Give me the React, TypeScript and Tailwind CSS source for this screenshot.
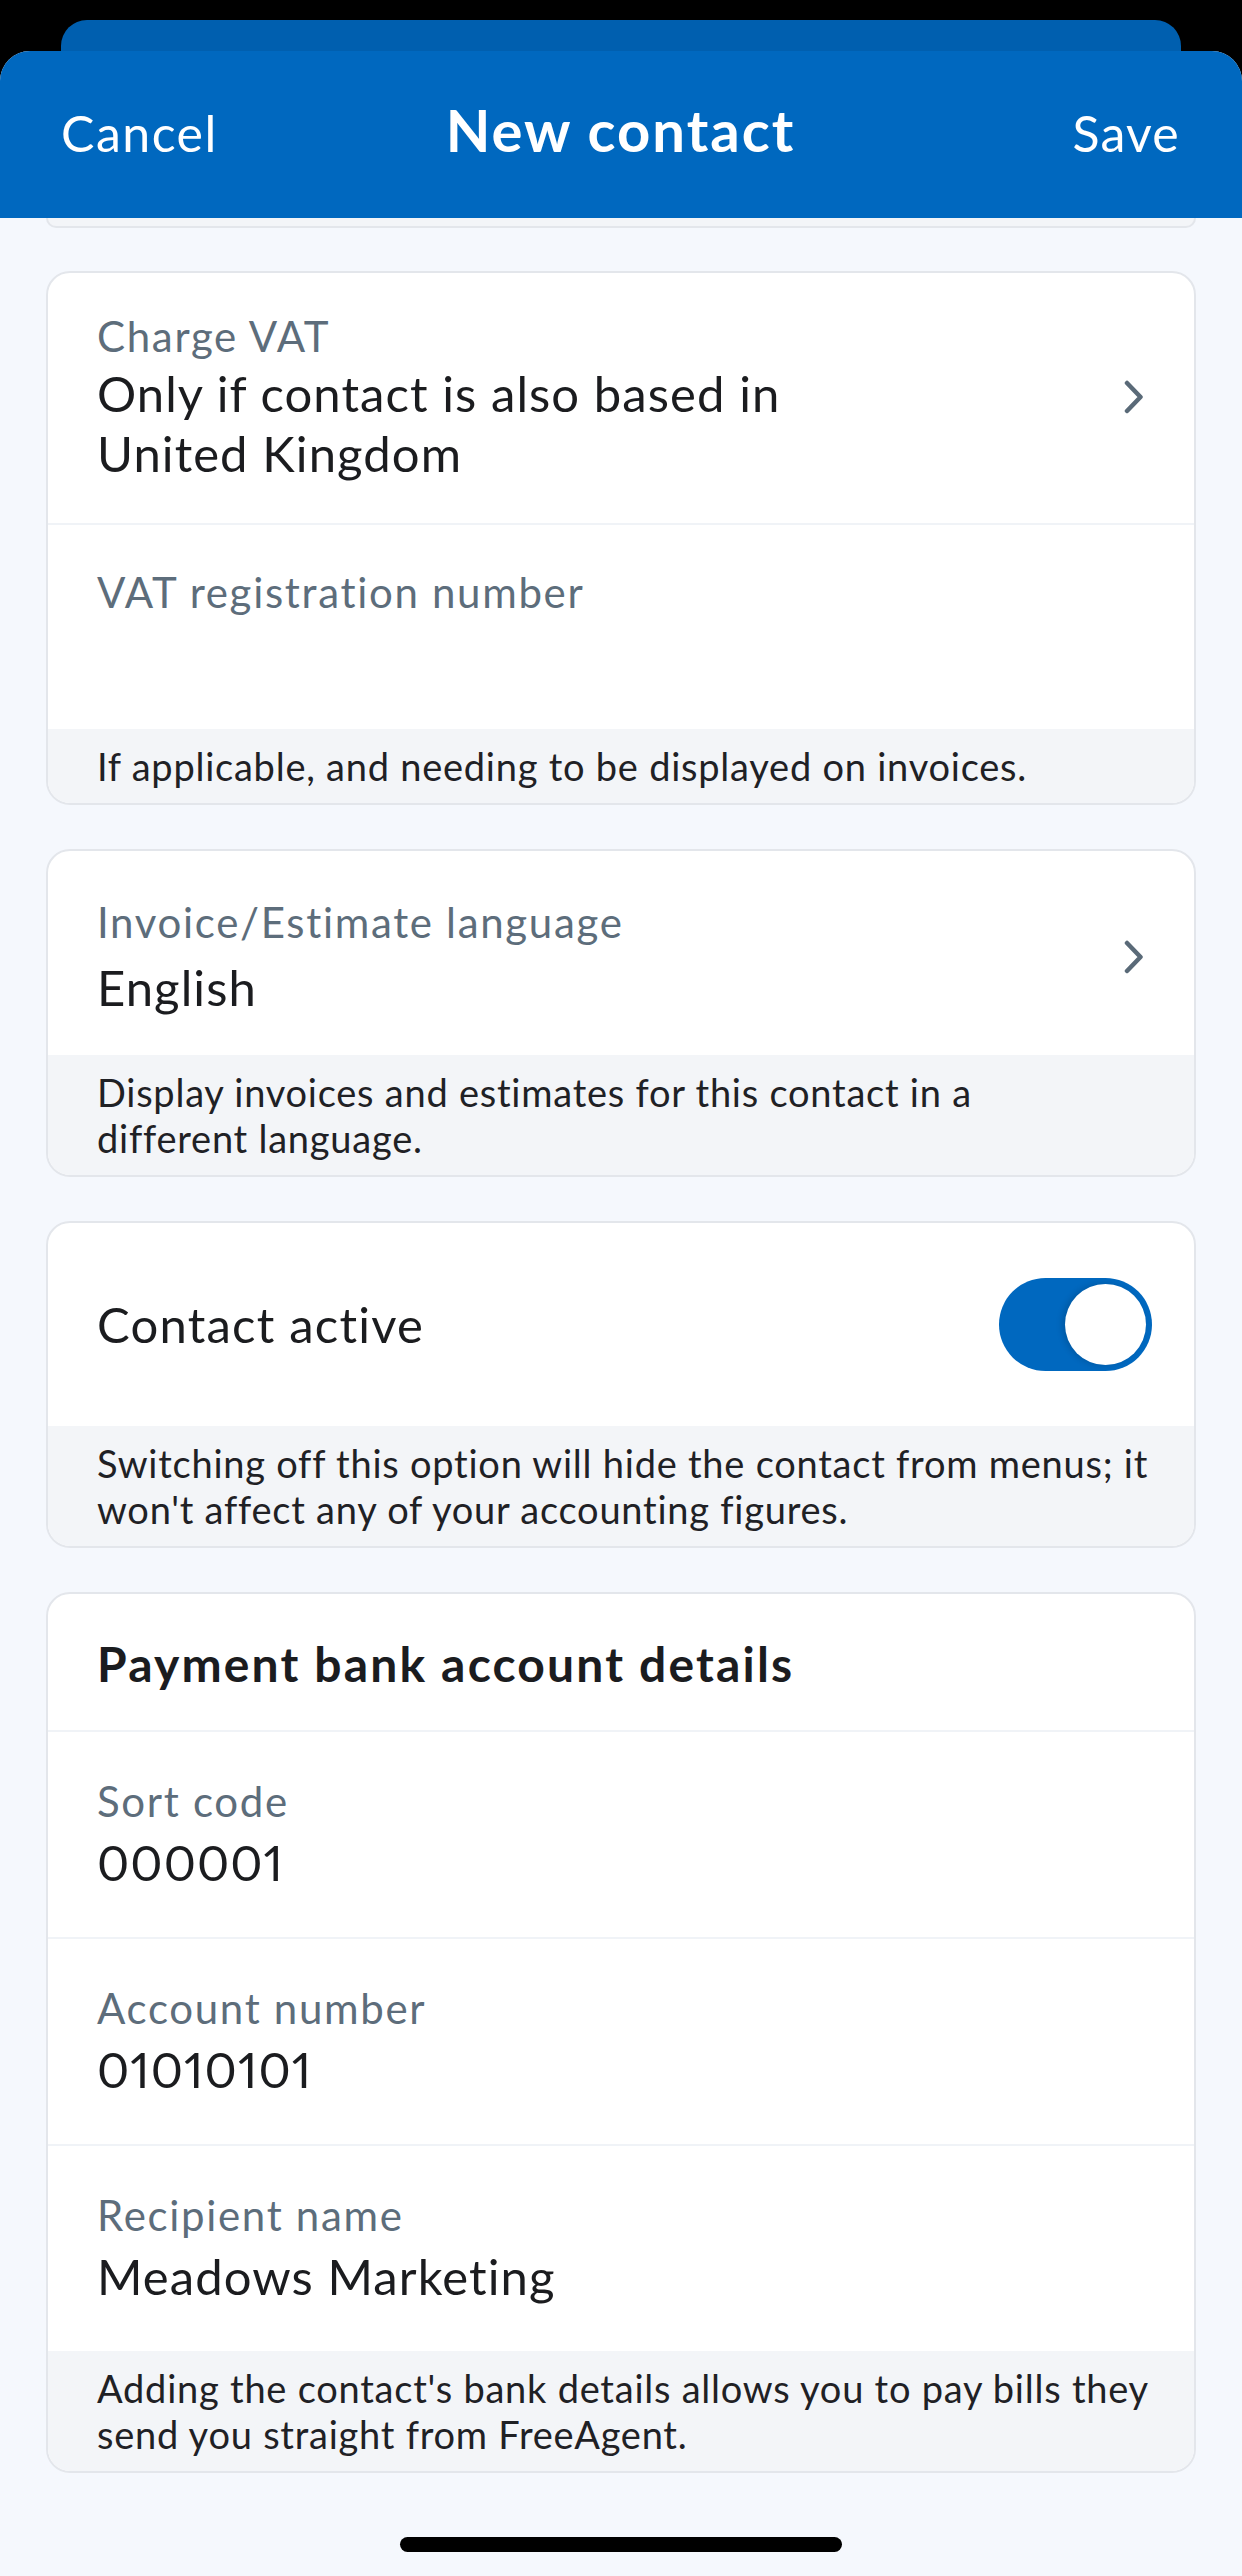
import React from "react";

const FONT = { fontFamily: "Lato, 'Noto Sans', Arial, sans-serif" };

function Chevron() {
  return (
    <svg width="20" height="34" viewBox="0 0 20 34" className="shrink-0">
      <path d="M3 3 L16.5 17 L3 31" fill="none" stroke="#5A6A78" strokeWidth="4.5" strokeLinecap="round" strokeLinejoin="round" />
    </svg>
  );
}

function Footer({ children }: { children: React.ReactNode }) {
  return (
    <div className="bg-[#F3F5F8] pl-[49px] pr-[30px] py-[14px] text-[38px] leading-[46px] tracking-[0.02em] text-[#1F2125]">
      {children}
    </div>
  );
}

function Field({ label, value, divider = true }: { label: string; value: string; divider?: boolean }) {
  return (
    <div className={`${divider ? "border-t-2 border-[#F0F3F7]" : ""} pl-[49px] pr-[51px] pt-[43px] pb-[45px]`}>
      <div className="text-[42px] leading-[52px] tracking-[0.04em] text-[#5D6D7B]">{label}</div>
      <div className="mt-[5px] text-[49px] leading-[60px] tracking-[0.022em] proportional-nums text-[#1B1C1F] min-h-[60px]">
        {value}
      </div>
    </div>
  );
}

export default function App() {
  return (
    <div className="w-[1242px] h-[2576px] bg-black flex flex-col overflow-hidden" style={FONT}>
      {/* stacked sheet behind */}
      <div className="mt-[20px] mx-[61px] h-[31px] rounded-t-[26px] bg-[#005FAF] shrink-0" />

      {/* front sheet */}
      <div className="flex-1 rounded-t-[30px] bg-[#F5F8FD] overflow-hidden flex flex-col">
        <div className="h-[167px] bg-[#0068BF] grid grid-cols-[1fr_auto_1fr] items-baseline pt-[50px] pl-[61px] pr-[62px] text-white shrink-0">
          <span className="justify-self-start text-[50px] leading-none tracking-[0.03em]">Cancel</span>
          <span className="text-[58px] leading-none font-bold tracking-[0.035em]">New contact</span>
          <span className="justify-self-end text-[50px] leading-none tracking-[0.025em]">Save</span>
        </div>

        {/* bottom edge of the card above */}
        <div className="mx-[46px] h-[10px] bg-[#F3F5F8] border-2 border-t-0 border-[#E3E6EB] rounded-b-[12px] shrink-0" />

        <div className="mx-[46px] mt-[43px] flex flex-col gap-[44px]">
          {/* VAT */}
          <div className="bg-white border-2 border-[#E3E6EB] rounded-[24px] overflow-hidden">
            <div className="flex items-center pl-[49px] pr-[50px] pt-[37px] pb-[40px]">
              <div className="flex-1">
                <div className="text-[42px] leading-[52px] tracking-[0.04em] text-[#5D6D7B]">Charge VAT</div>
                <div className="mt-[1px] text-[49px] leading-[60px] tracking-[0.022em] text-[#1B1C1F]">
                  Only if contact is also based in
                  <br />
                  United Kingdom
                </div>
              </div>
              <Chevron />
            </div>
            <div className="border-t-2 border-[#F0F3F7] pl-[49px] pr-[51px] pt-[41px] pb-[46px]">
              <div className="text-[42px] leading-[52px] tracking-[0.04em] text-[#5D6D7B]">VAT registration number</div>
              <div className="mt-[5px] h-[60px]" />
            </div>
            <Footer>If applicable, and needing to be displayed on invoices.</Footer>
          </div>

          {/* Language */}
          <div className="bg-white border-2 border-[#E3E6EB] rounded-[24px] overflow-hidden">
            <div className="flex items-center pl-[49px] pr-[50px] pt-[45px] pb-[38px]">
              <div className="flex-1">
                <div className="text-[42px] leading-[52px] tracking-[0.04em] text-[#5D6D7B]">Invoice/Estimate language</div>
                <div className="mt-[9px] text-[49px] leading-[60px] tracking-[0.022em] text-[#1B1C1F]">English</div>
              </div>
              <Chevron />
            </div>
            <Footer>
              Display invoices and estimates for this contact in a
              <br />
              different language.
            </Footer>
          </div>

          {/* Active */}
          <div className="bg-white border-2 border-[#E3E6EB] rounded-[24px] overflow-hidden">
            <div className="h-[203px] flex items-center justify-between pl-[49px] pr-[42px]">
              <span className="text-[49px] leading-none tracking-[0.025em] text-[#1B1C1F]">Contact active</span>
              <div className="w-[153px] h-[93px] rounded-full bg-[#0068BF] p-[6px] flex justify-end">
                <div className="w-[81px] h-[81px] rounded-full bg-white shadow-[-3px_0_6px_rgba(0,0,0,0.15)]" />
              </div>
            </div>
            <Footer>
              Switching off this option will hide the contact from menus; it
              <br />
              won't affect any of your accounting figures.
            </Footer>
          </div>

          {/* Bank details */}
          <div className="bg-white border-2 border-[#E3E6EB] rounded-[24px] overflow-hidden">
            <div className="pl-[49px] pr-[51px] pt-[42px] pb-[38px] text-[48px] leading-[56px] font-bold tracking-[0.045em] text-[#1B1C1F]">
              Payment bank account details
            </div>
            <Field label="Sort code" value="000001" />
            <Field label="Account number" value="01010101" />
            <Field label="Recipient name" value="Meadows Marketing" />
            <Footer>
              Adding the contact's bank details allows you to pay bills they
              <br />
              send you straight from FreeAgent.
            </Footer>
          </div>
        </div>

        <div className="mt-auto mb-[24px] mx-auto w-[442px] h-[15px] rounded-full bg-black shrink-0" />
      </div>
    </div>
  );
}
